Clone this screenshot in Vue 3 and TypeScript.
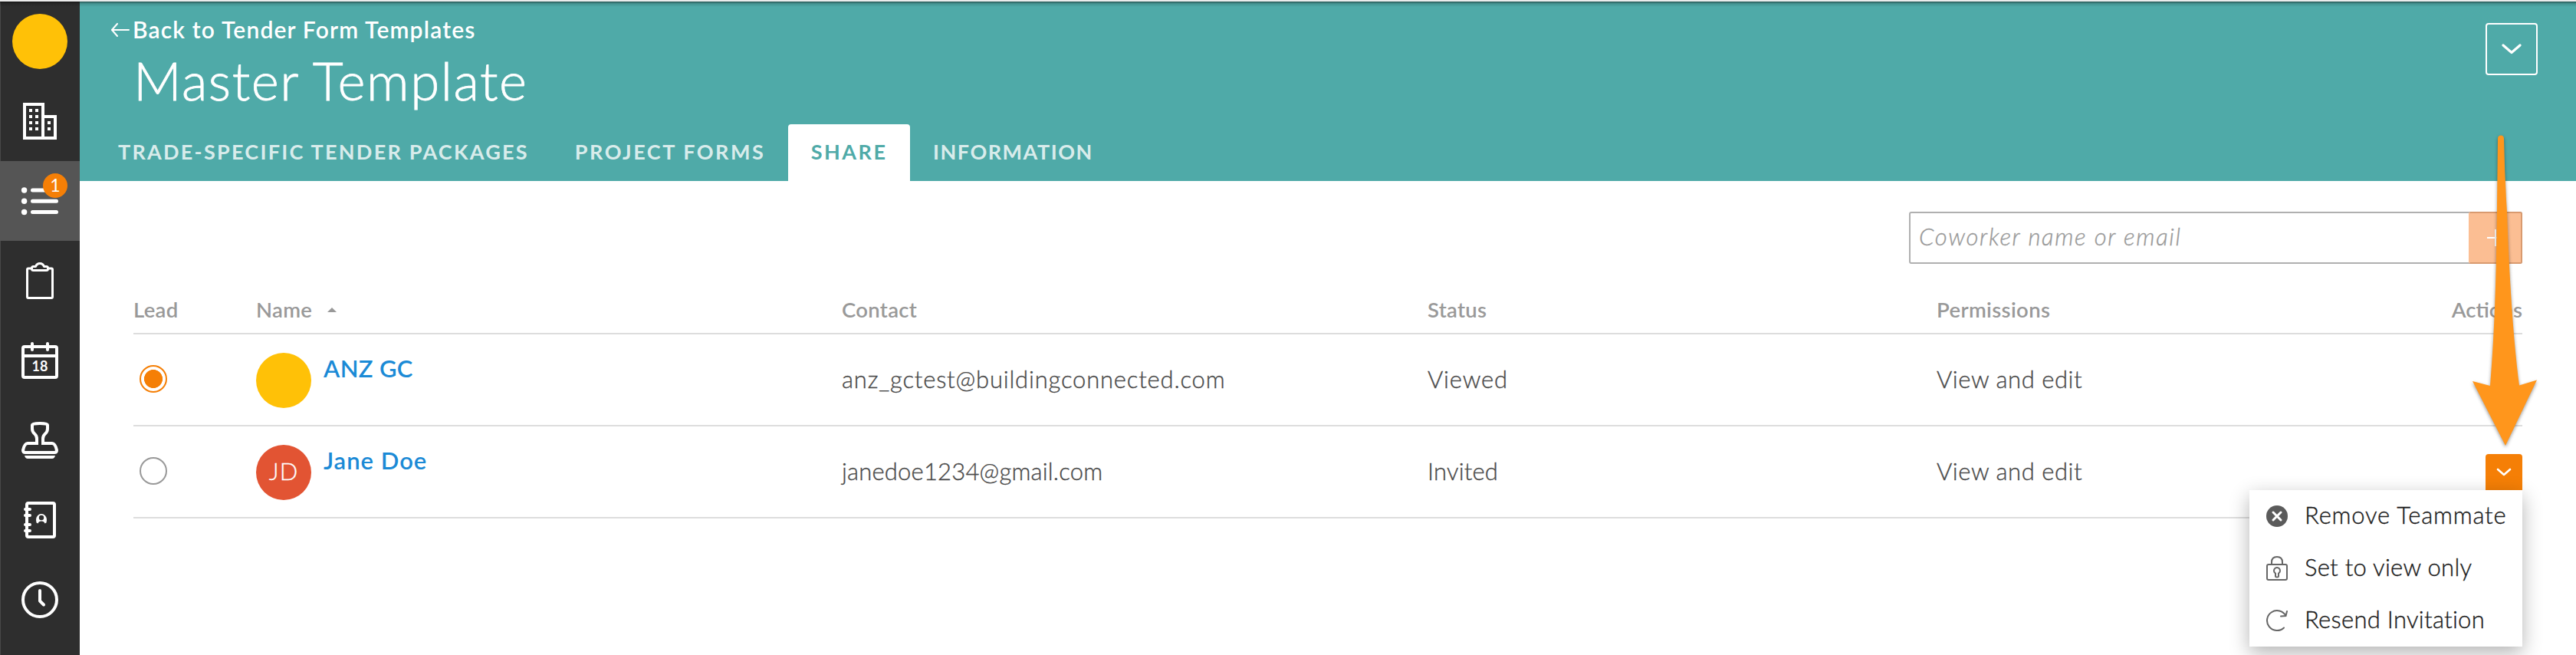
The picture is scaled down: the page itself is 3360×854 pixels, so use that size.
<script setup lang="ts">
interface Tab { label: string; active: boolean }
interface Teammate {
  name: string
  initials: string
  color: string
  contact: string
  status: string
  permissions: string
  lead: boolean
  open: boolean
}

const tabs: Tab[] = [
  { label: 'TRADE-SPECIFIC TENDER PACKAGES', active: false },
  { label: 'PROJECT FORMS', active: false },
  { label: 'SHARE', active: true },
  { label: 'INFORMATION', active: false },
]
const teammates: Teammate[] = [
  { name: 'ANZ GC', initials: '', color: 'yellow', contact: 'anz_gctest@buildingconnected.com', status: 'Viewed', permissions: 'View and edit', lead: true, open: false },
  { name: 'Jane Doe', initials: 'JD', color: 'red', contact: 'janedoe1234@gmail.com', status: 'Invited', permissions: 'View and edit', lead: false, open: true },
]
</script>

<template>
  <div class="app">
    <nav class="sidebar">
      <div class="nav-item"><span class="avatar yellow"></span></div>
      <div class="nav-item">
        <svg class="ico" viewBox="0 0 48 48" fill="none" stroke="#fff" stroke-width="4">
          <path d="M4 2h24v44H4zM28 18h16v28H28" />
          <path stroke-dasharray="4 4" d="M12 8v28M20 8v28M36 24v12" />
        </svg>
      </div>
      <div class="nav-item current">
        <svg class="ico" viewBox="0 0 48 48" fill="#fff" stroke="#fff" stroke-width="5" stroke-linecap="round">
          <path d="M14.5 10h31M14.5 24.300h31M14.500 38.500h31" />
          <g stroke="none"><circle cx="3.600" cy="10" r="3.700" /><circle cx="3.600" cy="24.300" r="3.700" /><circle cx="3.600" cy="38.500" r="3.700" /></g>
        </svg>
        <span class="badge">1</span>
      </div>
      <div class="nav-item">
        <svg class="ico" viewBox="0 0 48 48" fill="none" stroke="#fff" stroke-width="3" stroke-linejoin="round">
          <path d="M13 8H9Q7.500 8 7.500 9.500V45Q7.500 46.500 9 46.500H39Q40.500 46.500 40.500 45V9.500Q40.500 8 39 8H35" />
          <path d="M15.500 10.500Q13.500 10.500 13.500 8.500V7.500Q13.500 5.500 15.500 5.500H18.500Q20 1.500 24 1.500T29.500 5.500H32.500Q34.500 5.500 34.500 7.500V8.500Q34.500 10.500 32.500 10.500Z" />
        </svg>
      </div>
      <div class="nav-item">
        <svg class="ico" viewBox="0 0 48 48" fill="none" stroke="#fff" stroke-width="4">
          <rect x="2" y="6" width="44" height="40" rx="2" /><path d="M2 18h44" />
          <path stroke-linecap="round" d="M14 2v8M34 2v8" />
          <text class="cal" x="24" y="38" text-anchor="middle">18</text>
        </svg>
      </div>
      <div class="nav-item">
        <svg class="ico" viewBox="0 0 48 48" fill="none" stroke="#fff" stroke-width="4">
          <path d="M20 30V22Q20 18 17 15.500T14 9V4Q14 2 24 2T34 4V9Q34 13 31 15.500T28 22V30" />
          <path stroke-linejoin="round" d="M28 28H40Q44 28 46 37Q46 40 43 40H5Q2 40 2 37Q4 28 8 28H20" />
          <path d="M4 44H44Q43 48 40 48H8Q5 48 4 44Z" fill="#fff" stroke="none" />
        </svg>
      </div>
      <div class="nav-item">
        <svg class="ico" viewBox="0 0 48 48" fill="none" stroke="#fff" stroke-width="4">
          <rect x="7" y="2" width="36" height="44" rx="2" />
          <path stroke-linecap="round" d="M5 10h6M5 18h6M5 30h6M5 38h6" />
          <path fill="#fff" stroke="none" d="M19 24A7 8 0 0 1 33 24L32.500 27.500L30.500 28.500Q29.500 25.500 26 25.500T21.500 28.500L19.500 27.500Z" />
          <circle cx="26" cy="21" r="3.200" fill="#2e2e2e" stroke="none" />
        </svg>
      </div>
      <div class="nav-item">
        <svg class="ico" viewBox="0 0 48 48" fill="none" stroke="#fff" stroke-width="4" stroke-linecap="round" stroke-linejoin="round">
          <circle cx="24" cy="24" r="22" /><path d="M24 12V25.500L29 30.500" />
        </svg>
      </div>
    </nav>

    <main class="main">
      <header class="header">
        <div class="heading">
          <a class="back">
            <svg class="back-arrow" viewBox="0 0 24 18" fill="none" stroke="#fff" stroke-width="2" stroke-linecap="round"><path d="M1 9H23M8 1L1 9L8 17" /></svg>
            <span>Back to Tender Form Templates</span>
          </a>
          <h1 class="title">Master Template</h1>
        </div>
        <button class="menu-button">
          <svg width="26" height="14" viewBox="0 0 26 14" fill="none" stroke="#fff" stroke-width="3.200" stroke-linecap="round" stroke-linejoin="round"><path d="M2 2L13 11.500L24 2" /></svg>
        </button>
        <div class="tabs">
          <div v-for="tab in tabs" :key="tab.label" class="tab" :class="{ active: tab.active }">{{ tab.label }}</div>
        </div>
      </header>

      <section class="content">
        <div class="invite">
          <span class="placeholder">Coworker name or email</span>
          <span class="add"><svg width="24" height="24" viewBox="0 0 24 24" stroke="#fff" stroke-width="2"><path d="M1 12H23M12 1V23" /></svg></span>
        </div>
        <div class="row head">
          <div>Lead</div>
          <div class="sort"><span>Name</span><svg width="12" height="6" viewBox="0 0 12 6"><path d="M0 6L6 0L12 6Z" fill="#999" /></svg></div>
          <div>Contact</div>
          <div>Status</div>
          <div class="permissions">Permissions</div>
          <div class="actions">Actions</div>
        </div>
        <div v-for="m in teammates" :key="m.name" class="row body" :class="{ open: m.open }">
          <div><span class="radio" :class="{ checked: m.lead }"></span></div>
          <div class="person"><span class="avatar" :class="m.color">{{ m.initials }}</span><a class="name">{{ m.name }}</a></div>
          <div>{{ m.contact }}</div>
          <div>{{ m.status }}</div>
          <div class="permissions">{{ m.permissions }}</div>
          <div class="actions">
            <div v-if="m.open" class="action-button">
              <svg width="20" height="12" viewBox="0 0 20 12" fill="none" stroke="#fff" stroke-width="2.600" stroke-linecap="round" stroke-linejoin="round"><path d="M2 2L10 9L18 2" /></svg>
              <div class="menu">
                <div class="menu-item remove">
                  <svg width="28" height="32" viewBox="0 0 28 32"><circle cx="14" cy="16" r="14" fill="#5b5b5b" /><path d="M9 11L19 21M19 11L9 21" stroke="#fff" stroke-width="3" stroke-linecap="round" /></svg>
                  <span>Remove Teammate</span>
                </div>
                <div class="menu-item">
                  <svg width="28" height="32" viewBox="0 0 28 32" fill="none" stroke="#666" stroke-width="2"><rect x="1" y="11" width="26" height="20" rx="2" /><path d="M7 11V8Q7 1 14 1T21 8V11M12 22.500A4 4 0 1 1 16 22.500V26Q16 27.500 14 27.500T12 26Z" /></svg>
                  <span>Set to view only</span>
                </div>
                <div class="menu-item">
                  <svg width="28" height="32" viewBox="0 0 28 32" fill="none" stroke="#666" stroke-width="2" stroke-linecap="round"><path d="M23 25.500A13 13 0 1 1 25.500 10M19 10.500L25.500 10L27 4" /></svg>
                  <span>Resend Invitation</span>
                </div>
              </div>
            </div>
          </div>
        </div>
      </section>
    </main>

    <svg class="pointer" width="96" height="420" viewBox="0 0 96 420">
      <path d="M38 11Q38 6.500 42 6.500T46 11Q47 60 50 107C53 190 58 270 66 332.500L89 325.500L48 411L5 327L28 333C34 260 36 190 37 97Z" fill="#ff961c" />
    </svg>
  </div>
</template>

<style>
body { background: #fff; }
</style>

<style scoped>
* { box-sizing: border-box; }
.app { position: relative; display: flex; width: 3360px; height: 854px; overflow: hidden; border-top: 2px solid #ececec; background: #fff; color: #4a4a4a; font-family: Lato, "Open Sans", sans-serif; font-size: 31px; font-weight: 300; }
.app::before { content: ""; position: absolute; z-index: 2; top: 0; left: 0; right: 0; height: 7px; background: linear-gradient(rgba(0,0,0,.5), rgba(0,0,0,.14) 40%, transparent); }
.sidebar { flex: none; width: 104px; background: linear-gradient(90deg, #484848 1px, #2e2e2e 1px); }
.nav-item { position: relative; display: flex; align-items: center; justify-content: center; width: 104px; height: 104px; }
.nav-item.current { background: #555; }
.ico { width: 48px; height: 48px; overflow: visible; }
.cal { font-size: 18px; font-weight: 700; fill: #fff; stroke: none; }
.badge { position: absolute; top: 16px; left: 56px; width: 32px; height: 32px; border-radius: 50%; background: #f57f06; color: #fff; font-size: 23px; font-weight: 400; line-height: 31px; text-align: center; }
.avatar { flex: none; display: block; width: 72px; height: 72px; border-radius: 50%; color: #fff; font-size: 31px; letter-spacing: 1px; line-height: 68px; text-align: center; }
.yellow { background: #ffc107; }
.red { background: #e25433; }
.main { flex: 1; }
.header { position: relative; display: flex; flex-wrap: wrap; align-content: space-between; justify-content: space-between; height: 234px; padding: 16px 50px 0 56px; background: #4faaa8; color: #fff; }
.back { display: flex; align-items: center; width: max-content; margin-left: -15px; line-height: 41px; font-size: 30px; font-weight: 600; letter-spacing: 1.170px; }
.back-arrow { width: 24px; height: 18px; margin: 0 4px 0 0; }
.title { margin: 4px 0 0 14px; line-height: 84px; font-size: 69px; font-weight: 300; letter-spacing: 1.500px; -webkit-text-stroke: .8px; }
.menu-button { display: flex; align-items: center; justify-content: center; width: 68px; height: 68px; margin-top: 12px; padding: 0; border: 2px solid #fff; border-radius: 4px; background: none; }
.tabs { display: flex; width: 100%; height: 74px; margin-left: -36px; }
.tab { height: 74px; padding: 0 30px; border-radius: 4px 4px 0 0; color: rgba(255,255,255,.8); font-size: 27px; font-weight: 700; letter-spacing: 2.250px; line-height: 72px; white-space: nowrap; }
.tab + .tab { letter-spacing: 2.500px; }
.tab.active { padding: 0 29.500px; background: #fff; color: #4faaa8; }
.tab:last-child { letter-spacing: 1.500px; }
.content { padding: 40px 70px 0; -webkit-text-stroke: .35px; }
.invite { display: flex; width: 800px; height: 68px; margin-left: auto; border: 2px solid #b0b0b0; border-radius: 3px; }
.placeholder { flex: 1; padding-left: 11px; color: #999; font-style: italic; letter-spacing: 1.680px; line-height: 61px; }
.add { display: flex; align-items: center; justify-content: center; width: 70px; height: 68px; margin: -2px; border: 2px solid #d99a6f; border-left-color: #fbbe93; border-radius: 3px; background: #fbbe93; }
.row { display: grid; grid-template-columns: 160px 764px 764px 664px 1fr 200px; border-bottom: 2px solid #ddd; }
.head { height: 92px; padding-top: 42px; color: #999; font-size: 27.500px; font-weight: 600; letter-spacing: .300px; line-height: 36px; -webkit-text-stroke: 0; }
.sort { display: flex; align-items: center; gap: 20px; height: 36px; }
.body { height: 120px; letter-spacing: .8px; line-height: 116px; }
.body.open { letter-spacing: .180px; }
.row .permissions { letter-spacing: .550px; }
.head .permissions { letter-spacing: .350px; }
.radio { display: block; width: 36px; height: 36px; margin: 40px 0 0 8px; border: 2px solid #999; border-radius: 50%; }
.radio.checked { border-color: #f57f06; background: radial-gradient(circle, #f57f06 11.700px, transparent 12.300px); }
.person { display: flex; gap: 16px; padding-top: 24px; }
.name { color: #1b8ad6; font-weight: 600; letter-spacing: .350px; line-height: 41px; -webkit-text-stroke: 0; }
.open .name { letter-spacing: 1px; }
.actions { text-align: right; }
.action-button { position: relative; display: flex; align-items: center; justify-content: center; width: 48px; height: 48px; margin: 36px 0 0 auto; border-radius: 4px 4px 0 0; background: #f57f06; }
.head .actions { letter-spacing: 0; }
.menu { position: absolute; z-index: 1; top: 47px; right: 0; width: 356px; height: 204px; background: #fff; box-shadow: 0 8px 24px rgba(0,0,0,.3); color: #1b1b1b; }
.menu-item { display: flex; align-items: center; gap: 22px; height: 68px; padding-left: 22px; letter-spacing: .280px; line-height: 64px; white-space: nowrap; }
.menu-item span { height: 68px; }
.menu-item.remove { letter-spacing: .800px; }
.pointer { position: absolute; z-index: 3; left: 3220px; top: 168px; filter: drop-shadow(0 2px 2px rgba(0,0,0,.4)); }
</style>
